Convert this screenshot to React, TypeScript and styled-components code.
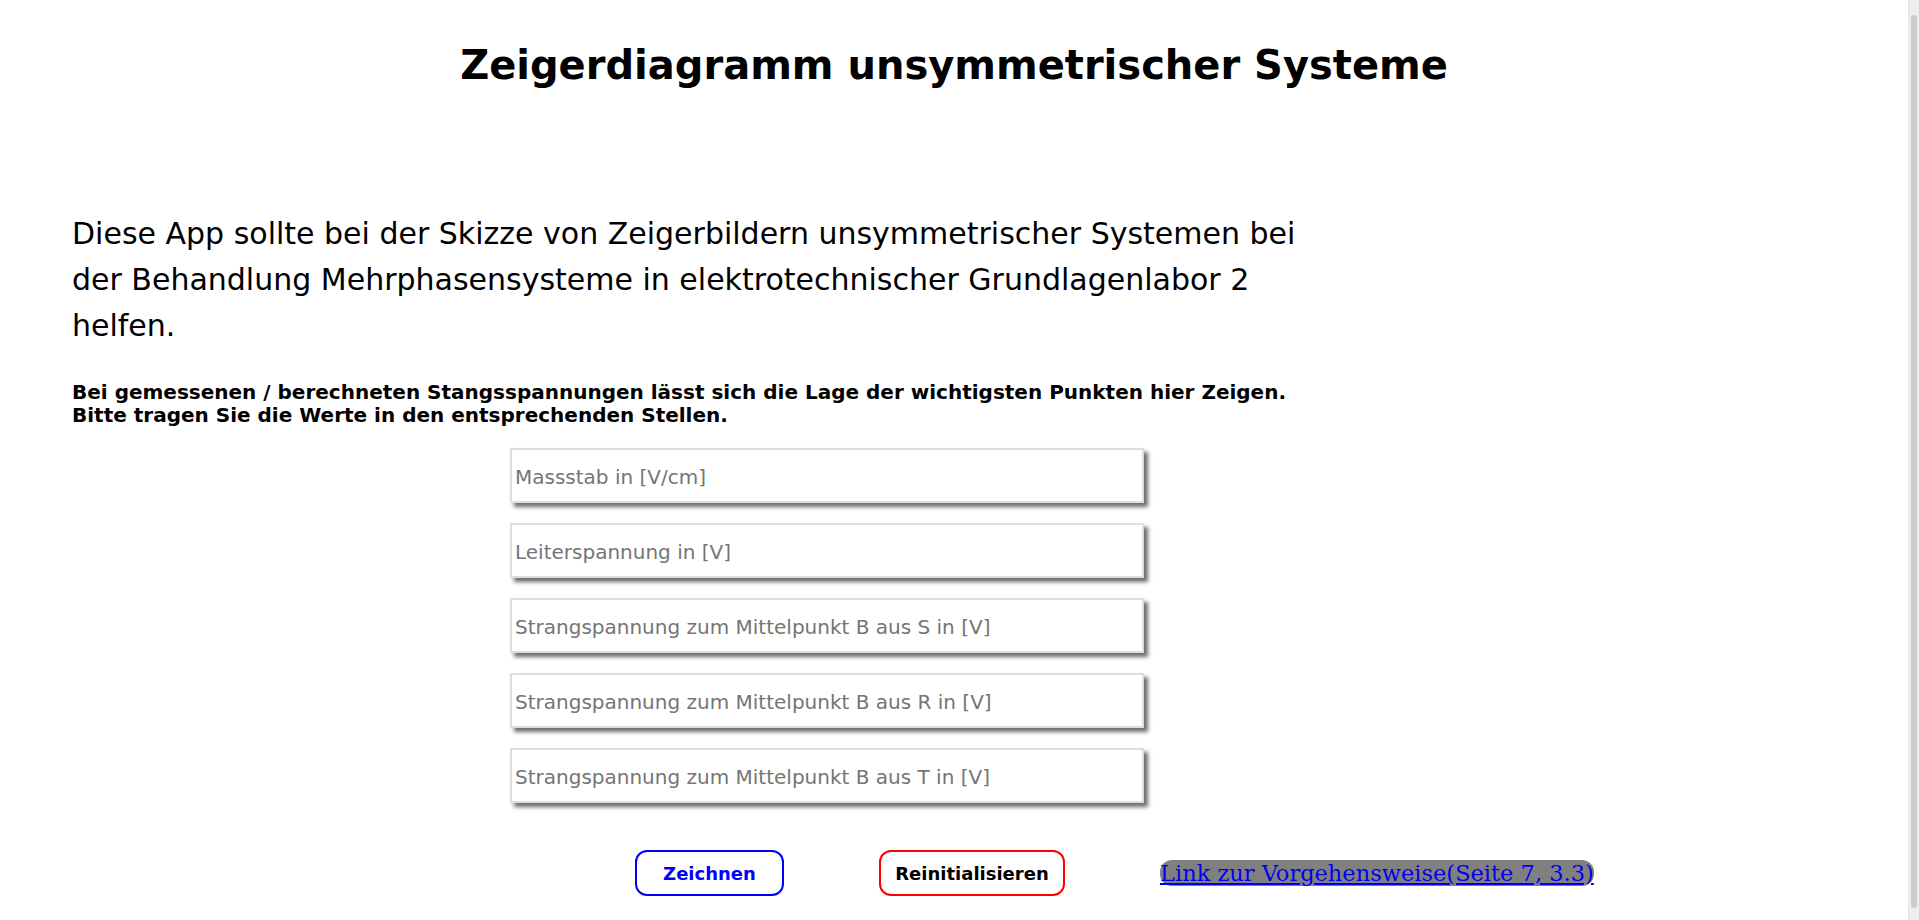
import React from "react";
import styled, { createGlobalStyle } from "styled-components";

const GlobalStyle = createGlobalStyle`
  html, body {
    margin: 0;
    padding: 0;
    background: #ffffff;
  }
  body {
    font-family: "DejaVu Sans", sans-serif;
    color: #000;
  }
  * { box-sizing: border-box; }
`;

const Page = styled.main`
  padding: 42px 11px 60px 0;
`;

const Title = styled.h1`
  margin: 0;
  font-size: 40px;
  line-height: 47px;
  font-weight: bold;
  text-align: center;
`;

const Intro = styled.p`
  margin: 122px 0 0 72px;
  max-width: 1240px;
  font-size: 30px;
  line-height: 46px;
`;

const Instructions = styled.p`
  margin: 32px 0 0 72px;
  font-size: 20px;
  line-height: 23px;
  font-weight: bold;
`;

const Form = styled.form`
  margin: 21px 0 0 510px;
  width: 634px;
  display: flex;
  flex-direction: column;
  gap: 20px;
`;

const Field = styled.input`
  height: 55px;
  width: 100%;
  padding: 2px 3px 0;
  border: 2px solid #dedede;
  box-shadow: 4px 4px 4px #6e6e6e;
  font-family: "DejaVu Sans", sans-serif;
  font-size: 20px;
  outline: none;
  &::placeholder {
    color: #757575;
  }
`;

const Actions = styled.div`
  margin: 47px 0 0 635px;
  display: flex;
  align-items: center;
  gap: 95px;
`;

const ActionButton = styled.button<{ $tone: "blue" | "red"; $w: number }>`
  width: ${(p) => p.$w}px;
  height: 46px;
  padding: 0;
  background: #ffffff;
  border: 2px solid ${(p) => (p.$tone === "blue" ? "#0000ff" : "#ff0000")};
  border-radius: 12px;
  color: ${(p) => (p.$tone === "blue" ? "#0000ff" : "#000000")};
  font-family: "DejaVu Sans", sans-serif;
  font-weight: bold;
  font-size: 18px;
  cursor: pointer;
`;

const GuideLink = styled.a`
  font-family: "DejaVu Serif", serif;
  font-size: 22.5px;
  color: #0000ee;
  text-decoration: underline;
  background: #808080;
  border-radius: 12px;
`;

const ScrollTrack = styled.div`
  position: fixed;
  top: 0;
  right: 0;
  bottom: 0;
  width: 11px;
  background: #ededed;
  border-left: 1px solid #e4e4e4;
`;

const ScrollThumb = styled.div`
  position: absolute;
  top: 15px;
  bottom: 12px;
  left: 2px;
  right: 2px;
  border-radius: 3px;
  background: #cbcbcb;
`;

const fields = [
  "Massstab in [V/cm]",
  "Leiterspannung in [V]",
  "Strangspannung zum Mittelpunkt B aus S in [V]",
  "Strangspannung zum Mittelpunkt B aus R in [V]",
  "Strangspannung zum Mittelpunkt B aus T in [V]",
];

export default function App() {
  return (
    <>
      <GlobalStyle />
      <Page>
        <Title>Zeigerdiagramm unsymmetrischer Systeme</Title>
        <Intro>
          Diese App sollte bei der Skizze von Zeigerbildern unsymmetrischer
          Systemen bei der Behandlung Mehrphasensysteme in elektrotechnischer
          Grundlagenlabor 2 helfen.
        </Intro>
        <Instructions>
          Bei gemessenen / berechneten Stangsspannungen lässt sich die Lage der
          wichtigsten Punkten hier Zeigen.
          <br />
          Bitte tragen Sie die Werte in den entsprechenden Stellen.
        </Instructions>
        <Form onSubmit={(e) => e.preventDefault()}>
          {fields.map((f) => (
            <Field key={f} type="text" placeholder={f} />
          ))}
        </Form>
        <Actions>
          <ActionButton type="button" $tone="blue" $w={149}>
            Zeichnen
          </ActionButton>
          <ActionButton type="button" $tone="red" $w={186}>
            Reinitialisieren
          </ActionButton>
          <GuideLink href="#">Link zur Vorgehensweise(Seite 7, 3.3)</GuideLink>
        </Actions>
      </Page>
      <ScrollTrack aria-hidden="true">
        <ScrollThumb />
      </ScrollTrack>
    </>
  );
}
